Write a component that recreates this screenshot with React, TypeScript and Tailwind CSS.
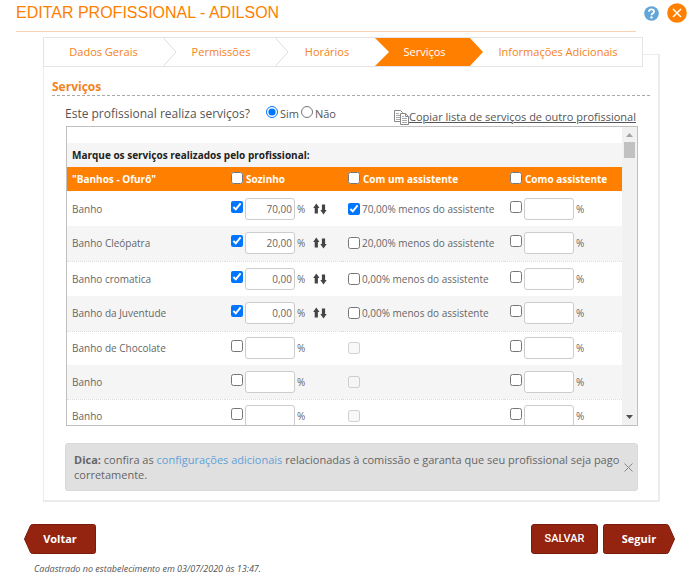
import { useState } from "react";
import { clsx } from "clsx";

type Service = {
  name: string;
  alone: string | null;
  withAssistant?: boolean;
};

const steps = ["Dados Gerais", "Permissões", "Horários", "Serviços", "Informações Adicionais"];
const activeStep = 3;

const services: Service[] = [
  { name: "Banho", alone: "70,00", withAssistant: true },
  { name: "Banho Cleópatra", alone: "20,00" },
  { name: "Banho cromatica", alone: "0,00" },
  { name: "Banho da Juventude", alone: "0,00" },
  { name: "Banho de Chocolate", alone: null },
  { name: "Banho", alone: null },
  { name: "Banho", alone: null },
];

function CopyIcon() {
  return (
    <svg width="15" height="15" viewBox="0 0 15 15" fill="#fff" stroke="#888" aria-hidden="true">
      <path d="M.5.5h6l2 2v9h-8z" />
      <path d="M2 3.500h3M2 5.500h4M2 7.500h4M2 9.500h4" stroke="#aaa" />
      <path d="M6.500 3.500h5l3 3v8h-8z" />
      <path d="M11.500 3.500v3h3" fill="none" />
      <path d="M8 6.500h2M8 8.500h5M8 10.500h5M8 12.500h5" stroke="#aaa" />
    </svg>
  );
}

function ArrowsIcon() {
  return (
    <svg width="14" height="12" viewBox="0 0 14 12" fill="#444" aria-hidden="true">
      <path d="M3.300.5 6.500 5H4.900v5.500H1.700V5H.2z" />
      <path d="M10.500 11.500 13.700 7h-1.600V1.500H8.900V7H7.300z" />
    </svg>
  );
}

function Steps() {
  return (
    <nav className="-mt-[18px] -ml-px mr-[15px] border border-[#e4e4e4] bg-white">
      <ol className="grid h-7 grid-cols-[119fr_112fr_100fr_95fr_172fr] text-[11px]">
        {steps.map((step, i) => {
          const active = i === activeStep;
          return (
            <li
              key={step}
              className={clsx(
                "relative flex items-center justify-center",
                i > 0 && "pl-1",
                active ? "bg-[#ff8000] text-white" : "text-[#f58220]",
              )}
            >
              {active && (
                <svg className="absolute left-0 top-0" width="14" height="28" viewBox="0 0 14 28" aria-hidden="true">
                  <path d="M0 0 14 14 0 28z" fill="#fff" />
                </svg>
              )}
              <a href="#" className="relative whitespace-nowrap" aria-current={active ? "step" : undefined}>
                {step}
              </a>
              {i < activeStep - 1 && (
                <svg className="absolute -right-3.5 top-0 z-10" width="14" height="28" viewBox="0 0 14 28" aria-hidden="true">
                  <path d="M.5 0 13 14 .5 28" fill="none" stroke="#dedede" />
                </svg>
              )}
              {active && (
                <svg className="absolute -right-3.5 top-0 z-10" width="14" height="28" viewBox="0 0 14 28" aria-hidden="true">
                  <path d="M0 0 13 14 0 28z" fill="#ff8000" />
                </svg>
              )}
            </li>
          );
        })}
      </ol>
    </nav>
  );
}

function PercentField({ label, checked, value }: { label: string; checked: boolean; value: string | null }) {
  return (
    <div className="flex items-center">
      <input type="checkbox" aria-label={label} defaultChecked={checked} className="mb-1 mr-0.5 size-3" />
      <input
        type="text"
        aria-label={`${label} (%)`}
        defaultValue={value ?? ""}
        className="h-[22px] w-[50px] rounded-[3px] border border-[#ccc] bg-white pr-0.5 text-right text-[10px] text-[#666]"
      />
      <span className="ml-0.5">%</span>
      {value !== null && (
        <button type="button" aria-label="Aplicar a todos" className="ml-2">
          <ArrowsIcon />
        </button>
      )}
    </div>
  );
}

function HeadCheck({ children }: { children: string }) {
  return (
    <th scope="col" className="p-0 pl-1.5 text-left">
      <label className="flex items-center gap-[3px]">
        <input type="checkbox" className="mb-0.5 size-3" />
        {children}
      </label>
    </th>
  );
}

function ServiceTable() {
  return (
    <table className="w-full table-fixed border-collapse text-[10px] leading-4 text-[#666]">
      <colgroup>
        <col className="w-[158px]" />
        <col className="w-[117px]" />
        <col className="w-[162px]" />
        <col />
      </colgroup>
      <caption className="bg-[#f5f5f5] pl-[5px] text-left text-[10px] font-bold leading-6 text-[#222]">
        Marque os serviços realizados pelo profissional:
      </caption>
      <thead>
        <tr className="h-6 bg-[#ff8000] text-[10px] font-bold text-white">
          <th scope="col" className="p-0 pl-[5px] text-left">
            "Banhos - Ofurô"
          </th>
          <HeadCheck>Sozinho</HeadCheck>
          <HeadCheck>Com um assistente</HeadCheck>
          <HeadCheck>Como assistente</HeadCheck>
        </tr>
      </thead>
      <tbody>
        {services.map((service, i) => (
          <tr
            key={i}
            className={clsx(
              service.alone !== null ? "h-[35px]" : "h-[34px]",
              i % 2 === 1 && "border-b border-dotted border-[#ddd] bg-[#f5f5f5]",
            )}
          >
            <td className="p-0 pl-[5px]">{service.name}</td>
            <td className="p-0 pl-1.5">
              <PercentField label={`${service.name} sozinho`} checked={service.alone !== null} value={service.alone} />
            </td>
            <td className="p-0 pl-1.5">
              <label className="flex items-center gap-0.5 whitespace-nowrap">
                <input
                  type="checkbox"
                  className="size-3"
                  defaultChecked={service.withAssistant}
                  disabled={service.alone === null}
                />
                {service.alone !== null && `${service.alone}% menos do assistente`}
              </label>
            </td>
            <td className="p-0 pl-1.5">
              <PercentField label={`${service.name} como assistente`} checked={false} value={null} />
            </td>
          </tr>
        ))}
      </tbody>
    </table>
  );
}

function ScrollRail() {
  return (
    <div className="flex w-[15px] shrink-0 flex-col items-center bg-[#f1f1f1]" aria-hidden="true">
      <svg width="15" height="15" viewBox="0 0 15 15">
        <path d="M4 10h7L7.500 6z" fill="#a3a3a3" />
      </svg>
      <div className="h-4 w-[11px] bg-[#c1c1c1]" />
      <svg className="mt-auto" width="15" height="15" viewBox="0 0 15 15">
        <path d="M4 5h7L7.500 9z" fill="#505050" />
      </svg>
    </div>
  );
}

function ArrowButton({ label, back }: { label: string; back?: boolean }) {
  return (
    <button type="button" className="relative h-[30px] w-[72px] text-[11px] font-bold text-white">
      <svg className={clsx("absolute inset-0", back && "-scale-x-100")} width="72" height="30" viewBox="0 0 72 30" aria-hidden="true">
        <path
          d="M2.500.5h61q1.500 0 2 1L71.500 15l-6 13.500q-.5 1-2 1h-61q-2 0-2-2v-25q0-2 2-2z"
          fill="#94230f"
          stroke="#7a1c0c"
        />
      </svg>
      <span className="relative">{label}</span>
    </button>
  );
}

export default function App() {
  const [tipOpen, setTipOpen] = useState(true);

  return (
    <main className="bg-white font-['Open_Sans',sans-serif] text-[#555]">
      <header className="flex pl-4 pr-px">
        <h1 className="mr-2 h-8 flex-1 border-b border-[#f9d2b0] font-['Liberation_Sans',sans-serif] text-[16px] leading-[26px] text-[#ff8000]">
          EDITAR PROFISSIONAL - ADILSON
        </h1>
        <div className="flex h-[26px] items-center gap-2">
          <button type="button" aria-label="Ajuda">
            <svg width="15" height="15" viewBox="0 0 15 15" aria-hidden="true">
              <circle cx="7.500" cy="7.500" r="7.300" fill="#62a5d8" />
              <path
                d="M5 5.800Q5 3.400 7.500 3.400T10 5.600Q10 6.800 8.700 7.500 7.500 8.100 7.500 9.200"
                fill="none"
                stroke="#fff"
                strokeWidth="1.900"
              />
              <circle cx="7.500" cy="11.400" r="1.200" fill="#fff" />
            </svg>
          </button>
          <button type="button" aria-label="Fechar">
            <svg width="20" height="20" viewBox="0 0 20 20" aria-hidden="true">
              <circle cx="10" cy="10" r="9.800" fill="#ff8000" />
              <path d="m6 6 8 8M14 6l-8 8" stroke="#fff" strokeWidth="1.500" />
            </svg>
          </button>
        </div>
      </header>

      <section className="ml-[43px] mr-7 mt-[22px] border border-r-2 border-b-2 border-[#ececec]">
        <Steps />

        <h2 className="mx-2 mt-3 border-b border-dashed border-[#aaa] text-[12px] font-bold leading-4 text-[#f58220]">
          Serviços
        </h2>

        <div className="ml-[21px] mr-[22px] flex items-center justify-between pt-[7px]">
          <fieldset className="flex items-center">
            <legend className="float-left mr-4 text-[12px] leading-5">Este profissional realiza serviços?</legend>
            <label className="mr-0.5 flex items-center gap-0.5 text-[11px]">
              <input type="radio" name="performs" defaultChecked className="mb-1 size-3" />
              Sim
            </label>
            <label className="flex items-center gap-0.5 text-[11px]">
              <input type="radio" name="performs" className="mb-1 size-3" />
              Não
            </label>
          </fieldset>
          <a href="#" className="mt-1.5 flex items-center text-[11px] leading-4">
            <CopyIcon />
            <span className="underline">Copiar lista de serviços de outro profissional</span>
          </a>
        </div>

        <div className="ml-[22px] mr-5 mt-px flex h-[300px] border border-[#c0c0c0]">
          <div className="flex-1 overflow-hidden pt-4">
            <ServiceTable />
          </div>
          <ScrollRail />
        </div>

        {tipOpen && (
          <aside className="ml-[21px] mr-5 mt-[17px] flex items-center justify-between rounded-[3px] border border-[#d9d9d9] bg-[#e0e0e0] py-2 pl-2 pr-1 text-[11px] leading-[15px] text-[#666]">
            <p>
              <b>Dica:</b> confira as{" "}
              <a href="#" className="text-[#62a0d8]">
                configurações adicionais
              </a>{" "}
              relacionadas à comissão e garanta que seu profissional seja pago corretamente.
            </p>
            <button type="button" aria-label="Fechar dica" onClick={() => setTipOpen(false)}>
              <svg width="9" height="9" viewBox="0 0 9 9" aria-hidden="true">
                <path d="m.5.5 8 8M8.500.5l-8 8" stroke="#888" />
              </svg>
            </button>
          </aside>
        )}
        <div className="h-[9px]" />
      </section>

      <footer className="pl-6 pr-[13px] pt-[22px]">
        <div className="flex items-center gap-[5px]">
          <ArrowButton label="Voltar" back />
          <button
            type="button"
            className="ml-auto h-[30px] w-[67px] rounded-[3px] border border-[#7a1c0c] bg-[#94230f] font-[Roboto,sans-serif] text-[11px] font-medium text-white"
          >
            SALVAR
          </button>
          <ArrowButton label="Seguir" />
        </div>
        <p className="ml-2.5 mt-[7px] text-[9px] italic leading-4">Cadastrado no estabelecimento em 03/07/2020 às 13:47.</p>
      </footer>
    </main>
  );
}
